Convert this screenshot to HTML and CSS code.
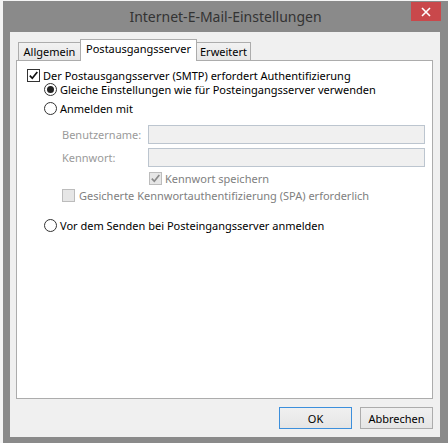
FILE: index.html
```html
<!DOCTYPE html>
<html lang="de">
<head>
    <meta charset="UTF-8">
    <title>Internet-E-Mail-Einstellungen</title>
    <link rel="stylesheet" href="styles.css">
</head>
<body>
    <div class="window">
        <div class="titlebar">
            <span></span>
            <span class="title">Internet-E-Mail-Einstellungen</span>
            <span class="close">
                <svg width="10" height="10" viewBox="0 0 10 10">
                    <path d="M1 1 L9 9 M9 1 L1 9" stroke="#fff" stroke-width="1.6"/>
                </svg>
            </span>
        </div>
        <div class="content">
            <div class="tabs">
                <div class="tab tab-general">Allgemein</div>
                <div class="tab tab-active">Postausgangsserver</div>
                <div class="tab tab-advanced">Erweitert</div>
            </div>
            <div class="panel">
                <div class="row">
                    <span class="check">
                        <svg width="11" height="11" viewBox="0 0 11 11">
                            <path d="M1.8 5.6 L4.3 8.3 L9.3 2" fill="none" stroke="#111" stroke-width="1.7"/>
                        </svg>
                    </span>
                    Der Postausgangsserver (SMTP) erfordert Authentifizierung
                </div>
                <div class="row indent">
                    <span class="radio radio-on"></span>
                    Gleiche Einstellungen wie für Posteingangsserver verwenden
                </div>
                <div class="row indent row-gap">
                    <span class="radio"></span>
                    Anmelden mit
                </div>
                <div class="field field-first">
                    <label class="field-label">Benutzername:</label>
                    <span class="textbox"></span>
                </div>
                <div class="field">
                    <label class="field-label">Kennwort:</label>
                    <span class="textbox"></span>
                </div>
                <div class="row disabled save-row">
                    <span class="check check-off">
                        <svg width="11" height="11" viewBox="0 0 11 11">
                            <path d="M1.8 5.6 L4.3 8.3 L9.3 2" fill="none" stroke="#8a8a8a" stroke-width="1.7"/>
                        </svg>
                    </span>
                    Kennwort speichern
                </div>
                <div class="row disabled spa-row">
                    <span class="check check-off"></span>
                    Gesicherte Kennwortauthentifizierung (SPA) erforderlich
                </div>
                <div class="row indent before-send">
                    <span class="radio"></span>
                    Vor dem Senden bei Posteingangsserver anmelden
                </div>
            </div>
            <div class="buttons">
                <button class="btn btn-default">OK</button>
                <button class="btn">Abbrechen</button>
            </div>
        </div>
    </div>
</body>
</html>
```

FILE: styles.css
```css
body {
    margin: 0;
    background: #f4f4f4;
    font-family: "Noto Sans", "Liberation Sans", sans-serif;
    font-size: 11px;
    color: #000;
}
.window {
    margin: 1px 0 0 3px;
    width: 445px;
    height: 442px;
    background: #8a8a8a;
    display: flex;
    flex-direction: column;
}
.titlebar {
    height: 31px;
    display: grid;
    grid-template-columns: 1fr auto 1fr;
    align-items: start;
}
.title {
    font-size: 14px;
    color: #333;
    margin-top: 6px;
}
.close {
    justify-self: end;
    margin: 1px 7px 0 0;
    width: 30px;
    height: 19px;
    background: #c9484b;
    display: flex;
    align-items: center;
    justify-content: center;
}
.content {
    margin: 0 8px 0 7px;
    height: 405px;
    background: #f0f0f0;
    padding: 7px 7px 0 6px;
    box-sizing: border-box;
}
.tabs {
    display: flex;
    align-items: flex-end;
    padding-left: 2px;
    height: 21px;
}
.tab {
    height: 18px;
    border: 1px solid #acacac;
    border-bottom: none;
    box-sizing: border-box;
    background: linear-gradient(#f2f2f2, #e6e6e6);
    text-align: center;
    line-height: 17px;
}
.tab-general {
    width: 62px;
    border-right: none;
}
.tab-advanced {
    width: 54px;
    border-left: none;
}
.tab-active {
    width: 117px;
    height: 22px;
    margin-bottom: -1px;
    background: #fff;
    line-height: 18px;
    position: relative;
}
.panel {
    height: 339px;
    border: 1px solid #acacac;
    background: #fff;
    box-sizing: border-box;
    padding: 7px 0 0 10px;
}
.row {
    height: 14px;
    display: flex;
    align-items: center;
    gap: 3px;
    white-space: nowrap;
}
.indent {
    padding-left: 17px;
}
.row-gap {
    margin-top: 5px;
}
.check {
    width: 13px;
    height: 13px;
    border: 1px solid #333;
    box-sizing: border-box;
    background: #fff;
    display: flex;
    align-items: center;
    justify-content: center;
}
.check-off {
    border-color: #bcbcbc;
    background: #e6e6e6;
}
.radio {
    width: 13px;
    height: 13px;
    border: 1px solid #333;
    border-radius: 50%;
    box-sizing: border-box;
    background: #fff;
    display: flex;
    align-items: center;
    justify-content: center;
}
.radio-on::after {
    content: "";
    width: 7px;
    height: 7px;
    border-radius: 50%;
    background: #222;
}
.field {
    display: flex;
    align-items: center;
    padding-left: 35px;
    margin-top: 4px;
}
.field-first {
    margin-top: 10px;
}
.field-label {
    width: 86px;
    color: #9a9a9a;
}
.textbox {
    width: 277px;
    height: 19px;
    border: 1px solid #bcc5cf;
    background: #f0f0f0;
    box-sizing: border-box;
}
.disabled {
    color: #808080;
}
.save-row {
    margin-top: 4px;
    padding-left: 122px;
}
.spa-row {
    margin-top: 3px;
    padding-left: 35px;
    gap: 4px;
}
.before-send {
    margin-top: 16px;
}
.buttons {
    display: flex;
    justify-content: flex-end;
    gap: 8px;
    margin-top: 8px;
}
.btn {
    width: 73px;
    height: 22px;
    border: 1px solid #acacac;
    background: linear-gradient(#f0f0f0, #e5e5e5);
    font-family: inherit;
    font-size: 11px;
    color: #000;
    padding: 0;
}
.btn-default {
    border-color: #3c8fdc;
}
```
